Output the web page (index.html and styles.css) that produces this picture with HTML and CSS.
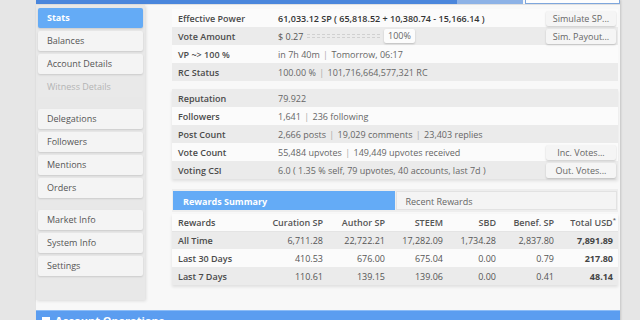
FILE: index.html
```html
<!DOCTYPE html>
<html lang="en">
<head>
    <meta charset="UTF-8">
    <title>Account Stats</title>
    <link rel="stylesheet" href="styles.css">
</head>
<body>
    <div class="page">
        <div class="topbar">
            <div class="tb-main"></div>
            <div class="tb-tab"></div>
            <div class="tb-tab current"></div>
        </div>

        <div class="main">
            <nav class="sidebar">
                <div class="nav-group">
                    <a class="nav-item active">Stats</a>
                    <a class="nav-item">Balances</a>
                    <a class="nav-item">Account Details</a>
                    <a class="nav-item disabled">Witness Details</a>
                </div>
                <div class="nav-group">
                    <a class="nav-item">Delegations</a>
                    <a class="nav-item">Followers</a>
                    <a class="nav-item">Mentions</a>
                    <a class="nav-item">Orders</a>
                </div>
                <div class="nav-group">
                    <a class="nav-item">Market Info</a>
                    <a class="nav-item">System Info</a>
                    <a class="nav-item">Settings</a>
                </div>
            </nav>

            <div class="content">
                <div class="info-table">
                    <div class="row">
                        <span class="label">Effective Power</span>
                        <span class="value strong">61,033.12 SP ( 65,818.52 + 10,380.74 - 15,166.14 )</span>
                        <button class="btn">Simulate SP...</button>
                    </div>
                    <div class="row alt">
                        <span class="label">Vote Amount</span>
                        <span class="value vote">
                            <span class="vote-amt">$ 0.27</span>
                            <span class="slider"></span>
                            <span class="pct">100%</span>
                        </span>
                        <button class="btn">Sim. Payout...</button>
                    </div>
                    <div class="row">
                        <span class="label">VP ~&gt; 100 %</span>
                        <span class="value">in 7h 40m <span class="sep">|</span> Tomorrow, 06:17</span>
                    </div>
                    <div class="row alt">
                        <span class="label">RC Status</span>
                        <span class="value">100.00 % <span class="sep">|</span> 101,716,664,577,321 RC</span>
                    </div>
                </div>

                <div class="info-table shadow">
                    <div class="row alt">
                        <span class="label">Reputation</span>
                        <span class="value">79.922</span>
                    </div>
                    <div class="row">
                        <span class="label">Followers</span>
                        <span class="value">1,641 <span class="sep">|</span> 236 following</span>
                    </div>
                    <div class="row alt">
                        <span class="label">Post Count</span>
                        <span class="value">2,666 posts <span class="sep">|</span> 19,029 comments <span class="sep">|</span> 23,403 replies</span>
                    </div>
                    <div class="row">
                        <span class="label">Vote Count</span>
                        <span class="value">55,484 upvotes <span class="sep">|</span> 149,449 upvotes received</span>
                        <button class="btn">Inc. Votes...</button>
                    </div>
                    <div class="row alt">
                        <span class="label">Voting CSI</span>
                        <span class="value">6.0 ( 1.35 % self, 79 upvotes, 40 accounts, last 7d )</span>
                        <button class="btn">Out. Votes...</button>
                    </div>
                </div>

                <div class="tabs">
                    <div class="tab active">Rewards Summary</div>
                    <div class="tab">Recent Rewards</div>
                </div>

                <table class="rewards">
                    <colgroup>
                        <col style="width: 95px">
                        <col style="width: 61px">
                        <col style="width: 62px">
                        <col style="width: 58px">
                        <col style="width: 53px">
                        <col style="width: 58px">
                        <col style="width: 59px">
                    </colgroup>
                    <thead>
                        <tr>
                            <th>Rewards</th>
                            <th>Curation SP</th>
                            <th>Author SP</th>
                            <th>STEEM</th>
                            <th>SBD</th>
                            <th>Benef. SP</th>
                            <th>Total USD<sup>*</sup></th>
                        </tr>
                    </thead>
                    <tbody>
                        <tr class="alt">
                            <td>All Time</td>
                            <td>6,711.28</td>
                            <td>22,722.21</td>
                            <td>17,282.09</td>
                            <td>1,734.28</td>
                            <td>2,837.80</td>
                            <td class="total">7,891.89</td>
                        </tr>
                        <tr>
                            <td>Last 30 Days</td>
                            <td>410.53</td>
                            <td>676.00</td>
                            <td>675.04</td>
                            <td>0.00</td>
                            <td>0.79</td>
                            <td class="total">217.80</td>
                        </tr>
                        <tr class="alt">
                            <td>Last 7 Days</td>
                            <td>110.61</td>
                            <td>139.15</td>
                            <td>139.06</td>
                            <td>0.00</td>
                            <td>0.41</td>
                            <td class="total">48.14</td>
                        </tr>
                    </tbody>
                </table>
            </div>
        </div>

        <div class="section-bar">
            <span class="collapse-icon"></span>
            Account Operations
        </div>
    </div>
</body>
</html>
```

FILE: styles.css
```css
* {
    margin: 0;
    padding: 0;
    box-sizing: border-box;
}

body {
    font-family: "Open Sans", "Liberation Sans", sans-serif;
    font-size: 9px;
    background-color: #e6e6e6;
    color: #555;
    overflow: hidden;
}

.page {
    margin-left: 36px;
    width: 584px;
    background: #f8f8f8;
    box-shadow: 1px 0 2px rgba(0,0,0,0.15);
}

/* top tab strip (cut off) */
.topbar {
    display: flex;
    height: 5px;
    border-bottom: 1px solid #e0e0e0;
}

.tb-main {
    flex: 1;
    background: #4a86dc;
}

.tb-tab {
    width: 66px;
    background: #8db2e6;
}

.tb-tab.current {
    width: 95px;
    margin-left: 2px;
    background: #fdfdfd;
    border: 1px solid #7ea6dc;
    border-top: none;
}

.main {
    display: flex;
    height: 305px;
}

/* left navigation */
.sidebar {
    width: 109px;
    height: 295px;
    padding: 3px 2px;
    background: #e8e8e8;
    box-shadow: 1px 1px 3px rgba(0,0,0,0.12);
}

.nav-group {
    display: flex;
    flex-direction: column;
    gap: 3px;
}

.nav-group + .nav-group {
    margin-top: 12px;
}

.nav-item {
    display: block;
    height: 20px;
    line-height: 20px;
    padding-left: 9px;
    background: #f4f4f4;
    color: #555;
    border-radius: 2px;
    box-shadow: 0 1px 2px rgba(0,0,0,0.13);
}

.nav-item.active {
    background: #64abf6;
    color: #fff;
    font-weight: 700;
}

.nav-item.disabled {
    background: #e9e9e9;
    color: #b4b4b4;
    box-shadow: none;
}

/* main content */
.content {
    flex: 1;
    padding: 4px 2px 0 27px;
}

.info-table {
    margin-bottom: 8px;
}

.info-table.shadow {
    box-shadow: 0 2px 3px rgba(0,0,0,0.1);
    margin-bottom: 10px;
}

.row {
    display: flex;
    align-items: center;
    height: 18px;
    background: #fbfbfb;
}

.row.alt {
    background: #ebebeb;
}

.label {
    width: 106px;
    padding-left: 6px;
    color: #4a4a4a;
    font-weight: 600;
}

.value {
    flex: 1;
    color: #666;
    white-space: nowrap;
}

.value.vote {
    display: flex;
    align-items: center;
    gap: 4px;
}

.value.strong {
    color: #333;
    font-weight: 600;
}

.sep {
    color: #aaa;
    margin: 0 1px;
}

.vote-amt {
    color: #555;
    width: 25px;
}

.slider {
    width: 73px;
    border-top: 1px dashed #d0d0d0;
    border-bottom: 1px dashed #d0d0d0;
    height: 4px;
}

.pct {
    height: 14px;
    line-height: 14px;
    padding: 0 4px;
    background: #fcfcfc;
    border-radius: 2px;
    box-shadow: 0 1px 2px rgba(0,0,0,0.2);
    color: #666;
}

.btn {
    width: 70px;
    height: 15px;
    margin-right: 2px;
    border: none;
    border-radius: 2px;
    background: #f5f5f5;
    box-shadow: 0 1px 2px rgba(0,0,0,0.2);
    font-family: inherit;
    font-size: 9px;
    color: #666;
}

/* rewards */
.tabs {
    display: flex;
    gap: 1px;
    padding: 2px 1px;
    background: #eeeeee;
}

.tab {
    flex: 1;
    height: 19px;
    line-height: 19px;
    padding-left: 9px;
    background: #f4f4f4;
    border: 1px solid #e2e2e2;
    color: #666;
}

.tab.active {
    background: #64abf6;
    border-color: #64abf6;
    color: #fff;
    font-weight: 700;
}

.rewards {
    width: 446px;
    margin-top: 2px;
    border-collapse: collapse;
    table-layout: fixed;
    box-shadow: 0 2px 3px rgba(0,0,0,0.1);
}

.rewards th,
.rewards td {
    height: 18px;
    padding: 0 5px;
    text-align: right;
    white-space: nowrap;
}

.rewards th {
    height: 17px;
    font-weight: 600;
    color: #555;
    background: #fbfbfb;
    border-bottom: 1px solid #e4e4e4;
}

.rewards th:first-child,
.rewards td:first-child {
    text-align: left;
    padding-left: 6px;
    color: #4a4a4a;
    font-weight: 600;
}

.rewards tr {
    background: #fbfbfb;
}

.rewards tr.alt {
    background: #ebebeb;
}

.rewards td.total {
    color: #444;
    font-weight: 700;
}

.rewards sup {
    font-size: 6px;
    margin-right: -3px;
}

/* collapsed section bar at the bottom */
.section-bar {
    display: flex;
    align-items: center;
    gap: 5px;
    height: 20px;
    padding-left: 6px;
    background: #5b9df0;
    border-top: 1px solid #8cbcf6;
    color: #fff;
    font-size: 11px;
    font-weight: 700;
}

.collapse-icon {
    width: 8px;
    height: 8px;
    background: #fff;
    position: relative;
}

.collapse-icon::after {
    content: "";
    position: absolute;
    left: 2px;
    right: 2px;
    top: 3px;
    height: 2px;
    background: #5b9df0;
}
```
